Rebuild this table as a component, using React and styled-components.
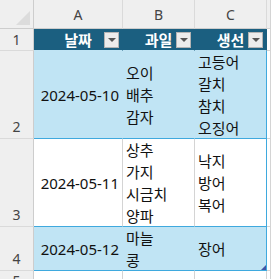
import React from 'react'
import styled, { createGlobalStyle } from 'styled-components'

const GlobalStyle = createGlobalStyle`
  html, body {
    margin: 0;
    padding: 0;
    background: #ffffff;
    overflow: hidden;
  }
  body {
    font-family: "Noto Sans", "Noto Sans CJK KR", sans-serif;
  }
`

const Sheet = styled.div`
  display: grid;
  grid-template-columns: 34px 89px 72px 72px 1fr;
  grid-template-rows: 29px 22px 88px 88px 44px 22px;
  width: 271px;
  height: 279px;
  overflow: hidden;
  & > * {
    box-sizing: border-box;
  }
`

const Corner = styled.div`
  position: relative;
  background: #efefef;
  border-right: 1px solid #cdcdcd;
  border-bottom: 1px solid #cdcdcd;
  &::after {
    content: "";
    position: absolute;
    right: 3px;
    bottom: 3px;
    width: 0;
    height: 0;
    border-left: 14px solid transparent;
    border-bottom: 14px solid #dcdcdc;
  }
`

const ColHead = styled.div`
  display: flex;
  align-items: center;
  justify-content: center;
  background: #efefef;
  border-right: 1px solid #dadada;
  border-bottom: 1px solid #cdcdcd;
  color: #444444;
  font-size: 14px;
`

const RowHead = styled.div`
  display: flex;
  align-items: ${p => (p.$center ? 'center' : 'flex-end')};
  justify-content: center;
  padding-bottom: ${p => (p.$center ? '0' : '2px')};
  background: #efefef;
  border-right: 1px solid #cdcdcd;
  border-bottom: 1px solid #dadada;
  color: #444444;
  font-size: 14px;
  line-height: 18px;
`

const HeaderCell = styled.div`
  position: relative;
  display: flex;
  align-items: center;
  justify-content: center;
  background: #1b5f80;
  border-right: 1px solid #1b5f80;
  border-bottom: 1px solid #c0e4f4;
  color: #ffffff;
  font-size: 15px;
  font-weight: 700;
`

const FilterButton = styled.span`
  position: absolute;
  top: 3px;
  right: 3px;
  width: 15px;
  height: 16px;
  box-sizing: border-box;
  background: #ececec;
  border: 1px solid #b4b4b4;
  display: flex;
  align-items: center;
  justify-content: center;
  &::after {
    content: "";
    width: 0;
    height: 0;
    border-left: 4px solid transparent;
    border-right: 4px solid transparent;
    border-top: 4px solid #555555;
  }
`

const DataCell = styled.div`
  position: relative;
  display: flex;
  flex-direction: column;
  justify-content: center;
  align-items: ${p => (p.$right ? 'flex-end' : 'flex-start')};
  padding: 0 3px;
  background: ${p => (p.$band ? '#c0e4f4' : '#ffffff')};
  border-bottom: 1px solid #3fa9de;
  border-right: 1px solid ${p => (p.$last ? '#3fa9de' : p.$band ? '#c0e4f4' : '#d4d4d4')};
  color: #111111;
  font-size: 15px;
  line-height: 22px;
  white-space: nowrap;
`

const ResizeHandle = styled.span`
  position: absolute;
  right: 0;
  bottom: 0;
  width: 0;
  height: 0;
  border-left: 5px solid transparent;
  border-bottom: 5px solid #4255a6;
`

const BlankCell = styled.div`
  background: ${p => (p.$head ? '#efefef' : '#ffffff')};
  border-right: 1px solid #d4d4d4;
  border-bottom: 1px solid #d4d4d4;
`

const columns = ['A', 'B', 'C']
const headers = ['날짜', '과일', '생선']

const rows = [
  { n: 2, band: true, date: '2024-05-10', fruit: ['오이', '배추', '감자'], fish: ['고등어', '갈치', '참치', '오징어'] },
  { n: 3, band: false, date: '2024-05-11', fruit: ['상추', '가지', '시금치', '양파'], fish: ['낙지', '방어', '복어'] },
  { n: 4, band: true, date: '2024-05-12', fruit: ['마늘', '콩'], fish: ['장어'], handle: true },
]

const Lines = ({ items }) => items.map(t => <span key={t}>{t}</span>)

export default function App() {
  return (
    <>
      <GlobalStyle />
      <Sheet>
        <Corner />
        {columns.map(c => <ColHead key={c}>{c}</ColHead>)}
        <BlankCell $head />

        <RowHead $center>1</RowHead>
        {headers.map(h => (
          <HeaderCell key={h}>
            {h}
            <FilterButton />
          </HeaderCell>
        ))}
        <BlankCell />

        {rows.map(r => (
          <React.Fragment key={r.n}>
            <RowHead>{r.n}</RowHead>
            <DataCell $band={r.band} $right>{r.date}</DataCell>
            <DataCell $band={r.band}><Lines items={r.fruit} /></DataCell>
            <DataCell $band={r.band} $last>
              <Lines items={r.fish} />
              {r.handle && <ResizeHandle />}
            </DataCell>
            <BlankCell />
          </React.Fragment>
        ))}

        <RowHead>5</RowHead>
        <BlankCell />
        <BlankCell />
        <BlankCell />
        <BlankCell />
      </Sheet>
    </>
  )
}
